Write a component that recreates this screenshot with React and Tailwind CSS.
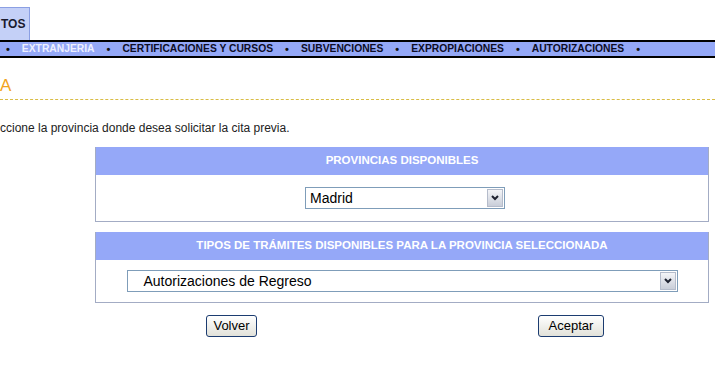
import { useState } from "react";

const navItems = [
  { label: "EXTRANJERIA", active: true },
  { label: "CERTIFICACIONES Y CURSOS" },
  { label: "SUBVENCIONES" },
  { label: "EXPROPIACIONES" },
  { label: "AUTORIZACIONES" },
];

// fake XP style combo box
function ComboBox({ value, className, textClass }) {
  return (
    <div className={`h-[22px] border border-[#7f9db9] bg-white flex items-center ${className}`}>
      <span className={`flex-1 text-[14px] leading-none text-black whitespace-nowrap ${textClass}`}>{value}</span>
      <div className="w-[16px] h-[18px] mr-[1px] border border-[#b5bccb] bg-gradient-to-b from-[#f4f5f8] to-[#c9ced9] flex items-center justify-center">
        <svg width="8" height="6" viewBox="0 0 8 6">
          <path d="M1 1 L4 4 L7 1" fill="none" stroke="#1e2230" strokeWidth="2" />
        </svg>
      </div>
    </div>
  );
}

function Panel({ title, children }) {
  return (
    <div className="ml-[95px] w-[614px] border border-[#a3acc4] bg-white">
      <div className="h-[28px] -mt-px bg-[#95a8f8] flex items-center justify-center text-white font-bold text-[11.5px]">
        {title}
      </div>
      {children}
    </div>
  );
}

export default function App() {
  const [provincia] = useState("Madrid");
  const [tramite] = useState("Autorizaciones de Regreso");

  return (
    <div className="w-[715px] h-[365px] overflow-hidden bg-white font-['Liberation_Sans',Arial,sans-serif] text-[#111]">
      <div className="pt-[7px] flex">
        <div className="h-[33px] w-[30px] bg-[#c4d0f7] border-t border-r border-[#8b9fe3] flex items-center">
          <span className="pl-[1px] text-[12px] font-bold text-[#1a1a2e]">TOS</span>
        </div>
      </div>

      <nav className="h-[18px] pt-px border-y-2 border-black bg-[#94a8f7] flex items-center gap-[12px] pl-[6px] text-[10.3px] font-bold leading-none">
        <span className="text-[11px] text-[#111]">•</span>
        {navItems.map((item) => (
          <div key={item.label} className="flex items-center gap-[12px]">
            <span className={item.active ? "text-[#eef0ff]" : "text-[#0d0d26]"}>{item.label}</span>
            <span className="text-[11px] text-[#111]">•</span>
          </div>
        ))}
      </nav>

      <div className="h-[42px] pt-[18px] border-b border-dashed border-[#d9bc45]">
        <span className="block text-[17px] leading-[20px] text-[#f2a31b]">A</span>
      </div>

      <p className="mt-[21px] text-[12px] leading-[15px] text-[#222] whitespace-nowrap">
        ccione la provincia donde desea solicitar la cita previa.
      </p>

      <div className="mt-[11px]">
        <Panel title="PROVINCIAS DISPONIBLES">
          <div className="h-[46px] flex items-center justify-center pl-[6px]">
            <ComboBox value={provincia} className="w-[200px]" textClass="pl-[4px]" />
          </div>
        </Panel>
      </div>

      <div className="mt-[10px]">
        <Panel title="TIPOS DE TRÁMITES DISPONIBLES PARA LA PROVINCIA SELECCIONADA">
          <div className="h-[42px] flex items-center justify-center">
            <ComboBox value={tramite} className="w-[551px]" textClass="pl-[16px]" />
          </div>
        </Panel>
      </div>

      <div className="mt-[12px] flex pl-[206px]">
        <button className="h-[22px] w-[51px] rounded-[3px] border border-[#1c3c70] bg-gradient-to-b from-white to-[#e2e2da] text-[13px] text-black">
          Volver
        </button>
        <button className="ml-[281px] h-[22px] w-[66px] rounded-[3px] border border-[#1c3c70] bg-gradient-to-b from-white to-[#e2e2da] text-[13px] text-black">
          Aceptar
        </button>
      </div>
    </div>
  );
}
